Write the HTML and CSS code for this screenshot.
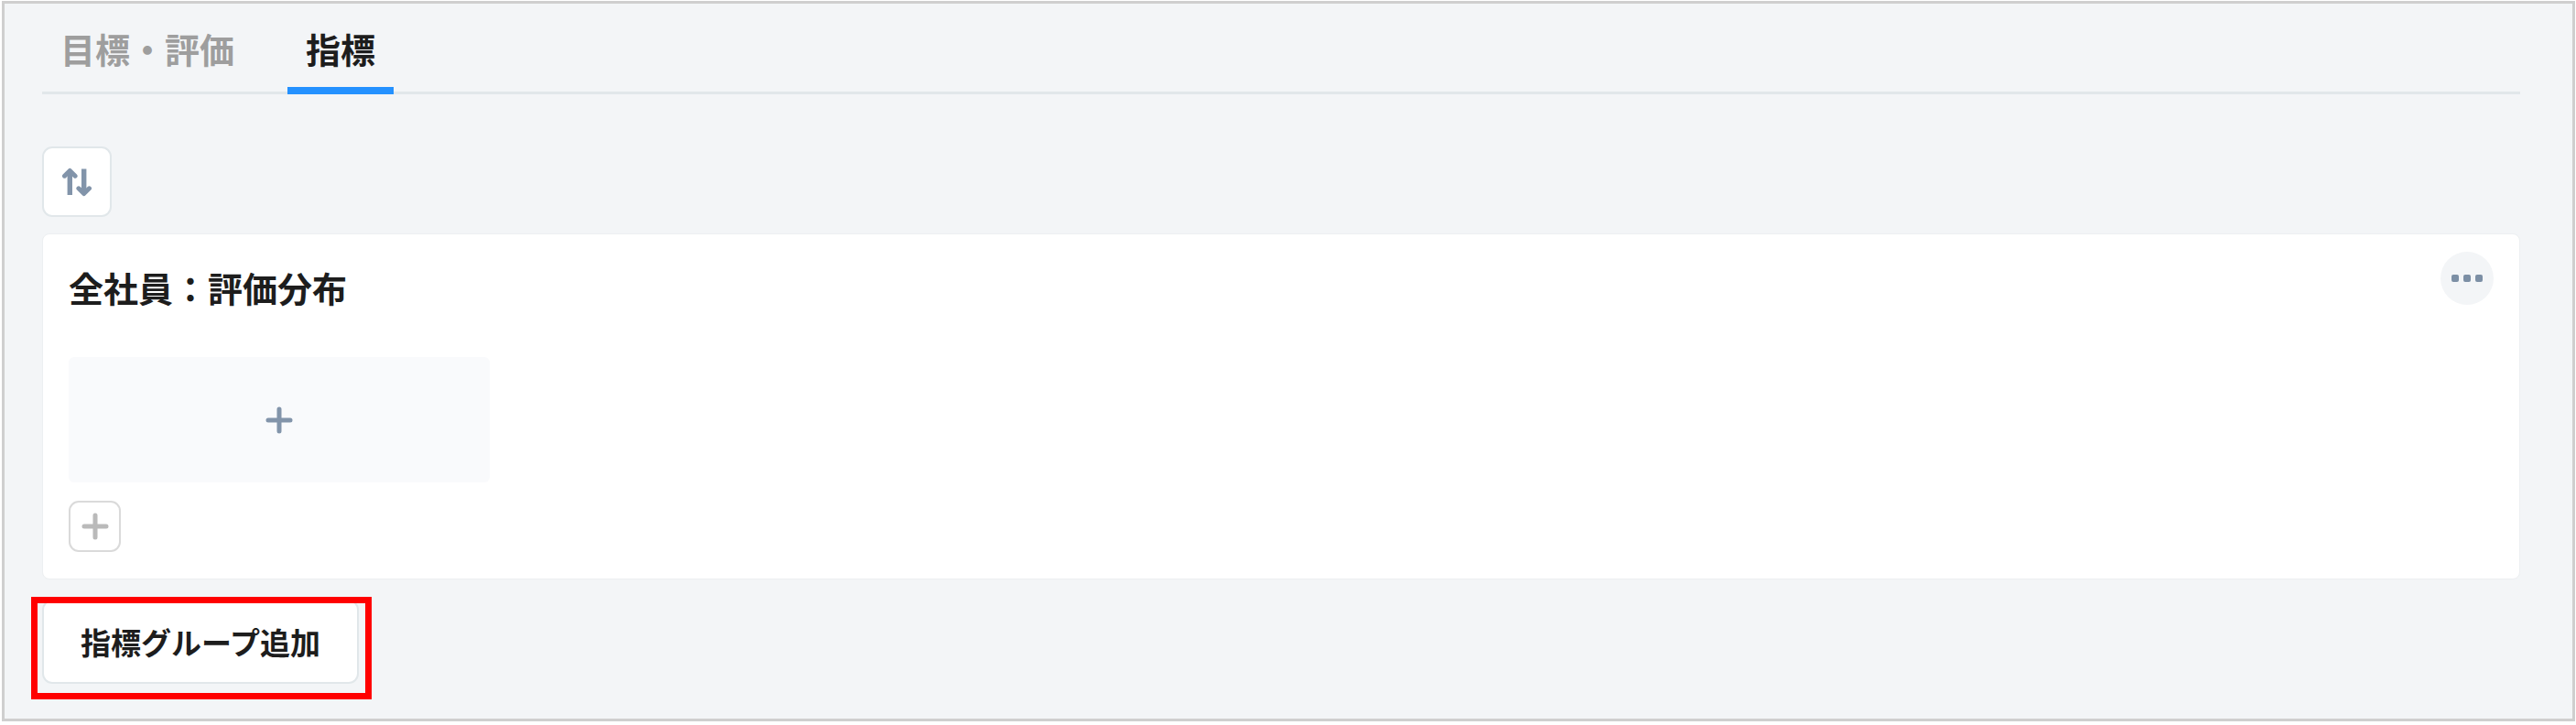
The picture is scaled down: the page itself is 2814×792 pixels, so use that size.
FILE: index.html
```html
<!DOCTYPE html>
<html lang="ja">
<head>
    <meta charset="UTF-8">
    <title>指標</title>

    <link rel="stylesheet" href="styles.css">

</head>
<body>


<main class="page">
    <nav class="tabs">
        <a class="tab" href="#">目標・評価</a>
        <a class="tab tab-active" href="#" aria-current="page">指標</a>
    </nav>

    <button class="btn btn-sort" type="button" aria-label="並び替え">
        <svg width="34" height="34" viewBox="0 0 34 34">
            <path d="M9.300 31V6" stroke-width="5.400"/>
            <path d="M3.500 10.200L9.300 4.400L15.100 10.200" stroke-width="5" stroke-linecap="round" stroke-linejoin="round"/>
            <path d="M24.700 2.500V27" stroke-width="5.400"/>
            <path d="M18.900 23.800L24.700 29.600L30.500 23.800" stroke-width="5" stroke-linecap="round" stroke-linejoin="round"/>
        </svg>
    </button>

    <section class="card">
        <header class="card_head">
            <h2>全社員：評価分布</h2>
            <button class="btn-more" type="button" aria-label="メニュー">
                <span></span>
                <span></span>
                <span></span>
            </button>
        </header>
        <button class="tile" type="button" aria-label="指標を追加">
            <svg width="30" height="30" viewBox="0 0 30 30">
                <path d="M15 3V27M3 15H27" stroke-width="5" stroke-linecap="round"/>
            </svg>
        </button>
        <button class="btn-row" type="button" aria-label="行を追加">
            <svg width="30" height="30" viewBox="0 0 30 30">
                <path d="M15 3V27M3 15H27" stroke-width="5" stroke-linecap="round"/>
            </svg>
        </button>
    </section>

    <div class="group_add">
        <button class="btn btn-group" type="button">指標グループ追加</button>
    </div>
</main>


</body>
</html>
```

FILE: styles.css
```css
* {
    box-sizing: border-box;
}

body {
    margin: 0;
    padding: 1px 1px 4px 2px;
    background-color: #fff;
    color: #1d1d1d;
    font-family: "Noto Sans CJK JP", sans-serif;
}

button {
    padding: 0;
    border: 0;
    color: inherit;
    font-family: inherit;
    cursor: pointer;
}

svg {
    display: block;
    fill: none;
    stroke: currentColor;
}

.page {
    display: flex;
    flex-flow: column nowrap;
    align-items: flex-start;
    padding: 0 57px 38px 41px;
    border: 3px solid #cfcfcf;
    background-color: #f3f5f7;
}

/* tabs */
.tabs {
    align-self: stretch;
    display: flex;
    gap: 38px;
    margin-bottom: 57px;
    box-shadow: inset 0 -3px #e1e7ea;
}

.tab {
    padding: 20px 20px 13px;
    border-bottom: 8px solid transparent;
    color: #9e9e9e;
    font-size: 38px;
    font-weight: 700;
    line-height: 58px;
    text-decoration: none;
}

.tab-active {
    border-color: #2491ff;
    color: #1d1d1d;
}

/* buttons */
.btn {
    border: 2px solid #e1e7ea;
    border-radius: 11px;
    background-color: #fff;
}

.btn-sort {
    display: flex;
    align-items: center;
    justify-content: center;
    width: 76px;
    height: 77px;
    margin-bottom: 18px;
    color: #8294aa;
}

.btn-group {
    padding: 20px 40px;
    font-size: 33px;
    font-weight: 700;
    line-height: 48px;
}

/* card */
.card {
    align-self: stretch;
    margin-bottom: 22px;
    padding: 19px 28px 29px;
    border: 1px solid #eceff1;
    border-radius: 8px;
    background-color: #fff;
}

.card_head {
    display: flex;
    align-items: flex-start;
    justify-content: space-between;
    margin-bottom: 47px;
}

.card_head h2 {
    margin: 0;
    padding-top: 10px;
    font-size: 38px;
    font-weight: 700;
    line-height: 58px;
}

.btn-more {
    display: flex;
    align-items: center;
    justify-content: center;
    gap: 5px;
    width: 58px;
    height: 58px;
    border-radius: 50%;
    background-color: #f3f5f7;
}

.btn-more span {
    width: 8px;
    height: 8px;
    border-radius: 2px;
    background-color: #7c8fa5;
}

.tile {
    display: flex;
    align-items: center;
    justify-content: center;
    width: 460px;
    height: 137px;
    margin-bottom: 20px;
    border-radius: 6px;
    background-color: #f9fafc;
    color: #8294aa;
}

.btn-row {
    display: flex;
    align-items: center;
    justify-content: center;
    width: 57px;
    height: 56px;
    border: 2px solid #dadada;
    border-radius: 11px;
    background-color: #fff;
    color: #bababa;
}

/* red frame round the add button */
.group_add {
    position: relative;
    display: flex;
}

.group_add::after {
    content: "";
    position: absolute;
    inset: -3px -14px -17px -12px;
    border: 7px solid #f00;
    pointer-events: none;
}
```
